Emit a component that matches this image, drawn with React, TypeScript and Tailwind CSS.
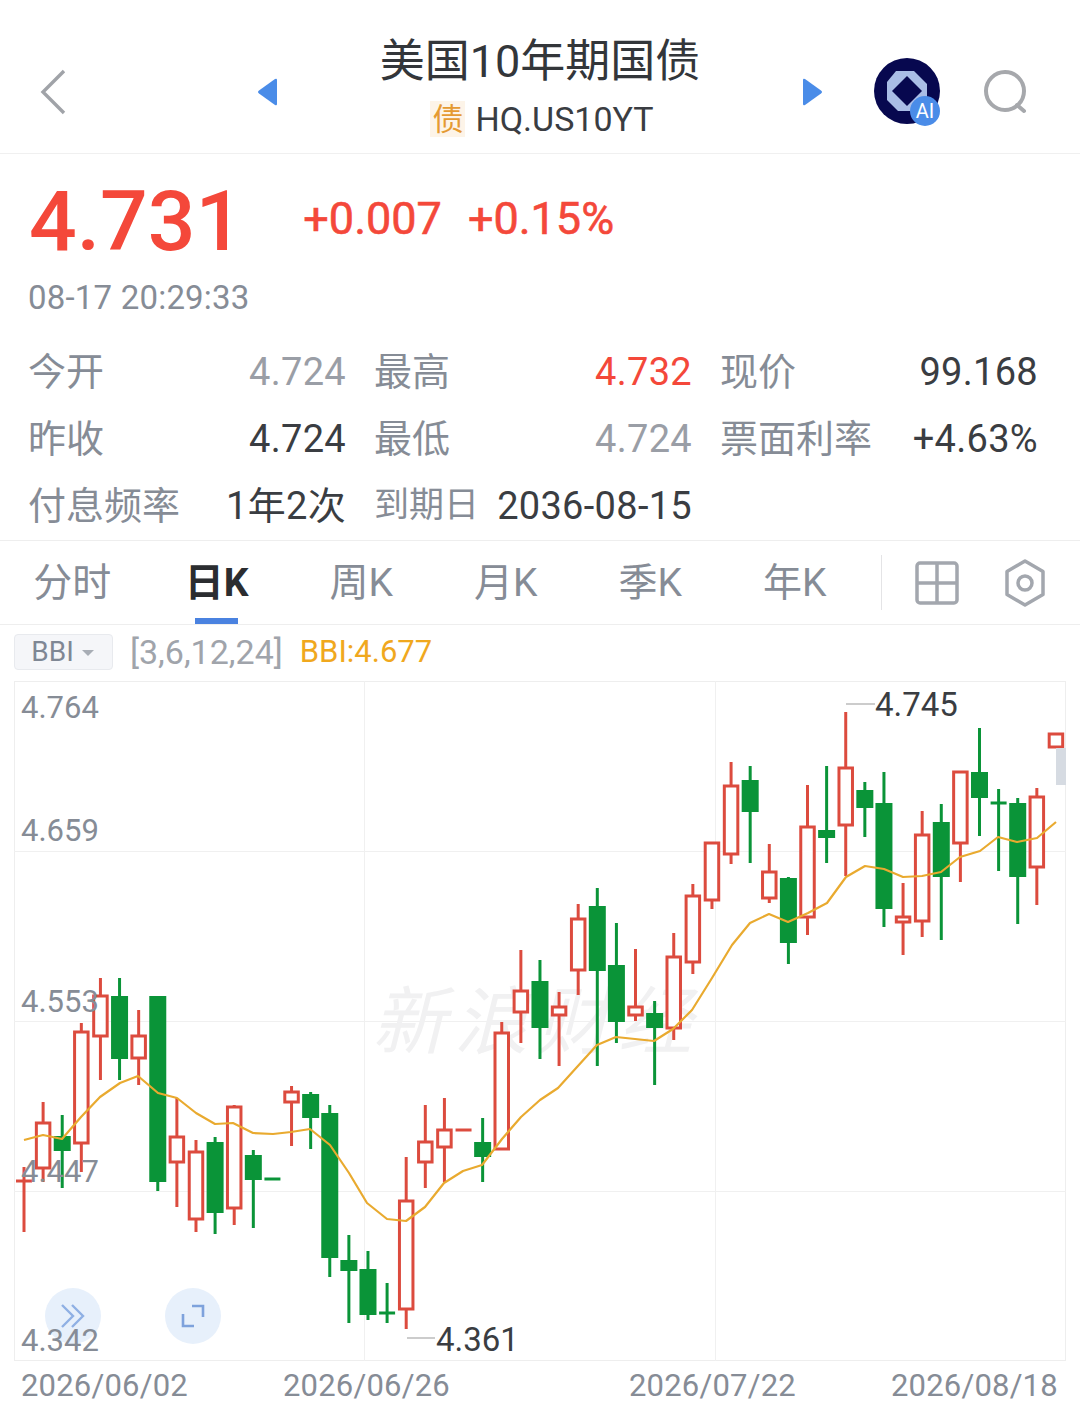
const RED = "#dc4b3e";
const GREEN = "#0a9438";

// [high, bodyTop, bodyBottom, low, up]
const candles: [number, number, number, number, boolean][] = [
  [1167, 1181, 1181, 1232, true],
  [1102, 1123, 1168, 1182, true],
  [1115, 1136, 1151, 1188, false],
  [1023, 1032, 1143, 1172, true],
  [978, 996, 1036, 1080, true],
  [978, 996, 1059, 1080, false],
  [1010, 1036, 1058, 1085, true],
  [996, 996, 1182, 1191, false],
  [1098, 1137, 1162, 1207, true],
  [1140, 1152, 1219, 1232, true],
  [1137, 1142, 1213, 1234, false],
  [1105, 1107, 1208, 1225, true],
  [1150, 1155, 1180, 1228, false],
  [1179, 1179, 1179, 1179, false],
  [1086, 1092, 1102, 1146, true],
  [1092, 1094, 1118, 1149, false],
  [1105, 1113, 1258, 1277, false],
  [1235, 1260, 1271, 1323, false],
  [1251, 1269, 1315, 1320, false],
  [1283, 1313, 1313, 1323, false],
  [1157, 1201, 1309, 1329, true],
  [1105, 1142, 1162, 1188, true],
  [1098, 1130, 1147, 1182, true],
  [1130, 1130, 1130, 1130, true],
  [1118, 1142, 1157, 1182, false],
  [1022, 1033, 1149, 1149, true],
  [950, 991, 1012, 1043, true],
  [960, 981, 1028, 1059, false],
  [992, 1007, 1015, 1066, true],
  [904, 919, 970, 995, true],
  [888, 906, 971, 1066, false],
  [923, 965, 1022, 1043, false],
  [949, 1007, 1015, 1021, true],
  [1001, 1013, 1028, 1085, false],
  [933, 957, 1028, 1040, true],
  [884, 896, 962, 974, true],
  [842, 843, 900, 909, true],
  [762, 786, 854, 864, true],
  [766, 780, 812, 863, false],
  [844, 872, 898, 903, true],
  [877, 878, 943, 964, false],
  [785, 827, 917, 935, true],
  [766, 830, 838, 863, false],
  [712, 768, 825, 876, true],
  [782, 790, 808, 837, false],
  [772, 803, 909, 927, false],
  [883, 917, 922, 955, true],
  [811, 835, 921, 937, true],
  [804, 822, 877, 940, false],
  [771, 772, 843, 882, true],
  [728, 772, 798, 836, false],
  [789, 803, 803, 871, false],
  [798, 803, 877, 924, false],
  [788, 797, 867, 905, true],
  [734, 734, 747, 747, true],
];

const bbi =
  "24,1140 43,1135 62,1139 81,1117 100,1097 120,1083 138,1076 158,1093 177,1098 196,1113 215,1124 233,1123 253,1133 273,1134 291,1132 310,1129 330,1145 349,1173 367,1203 387,1219 406,1221 425,1207 444,1183 463,1171 482,1165 502,1139 521,1117 540,1100 558,1088 577,1067 597,1045 616,1037 635,1039 654,1041 673,1029 692,1010 712,978 732,945 750,923 769,914 788,922 808,913 827,903 846,877 865,866 884,869 903,877 922,876 941,872 960,857 980,851 998,837 1017,842 1037,838 1056,822";

const Candle = ({ c, x }: { c: (typeof candles)[number]; x: number }) => {
  const [high, top, bottom, low, up] = c;
  const color = up ? RED : GREEN;
  const flat = bottom - top < 3;
  return (
    <g>
      {high < low && <line x1={x} x2={x} y1={high} y2={low} stroke={color} strokeWidth={3} />}
      {flat ? (
        <line x1={x - 8} x2={x + 8} y1={top} y2={top} stroke={color} strokeWidth={3} />
      ) : up ? (
        <rect x={x - 6.75} y={top} width={13.5} height={bottom - top} fill="#fff" stroke={color} strokeWidth={3} />
      ) : (
        <rect x={x - 8.5} y={top} width={17} height={bottom - top} fill={color} />
      )}
    </g>
  );
};

const Cell = ({ label, value, valueClass = "text-[#3a3d42]", labelClass = "text-[38px]" }: { label: string; value: string; valueClass?: string; labelClass?: string }) => (
  <div className="flex w-[318px] items-center justify-between">
    <span className={`text-[#868c96] ${labelClass}`}>{label}</span>
    <span className={`text-[38px] tracking-[0.3px] ${valueClass}`}>{value}</span>
  </div>
);

const TabItem = ({ label, active }: { label: string; active?: boolean }) => (
  <div className="relative flex w-[144.5px] items-center justify-center pt-[2px]">
    <span className={active ? "text-[39px] font-bold text-[#2b2d30]" : "text-[39px] text-[#868c96]"}>{label}</span>
    {active && <div className="absolute bottom-0 left-[50px] h-[6px] w-[43px] bg-[#4a82e0]" />}
  </div>
);

const Triangle = ({ left }: { left?: boolean }) => (
  <svg width="20" height="30" viewBox="0 0 20 30" className="mt-[30px] shrink-0">
    <path
      d={left ? "M18 2 L2 13.5 Q0 15 2 16.5 L18 28 Q20 29 20 27 L20 3 Q20 1 18 2Z" : "M2 2 L18 13.5 Q20 15 18 16.5 L2 28 Q0 29 0 27 L0 3 Q0 1 2 2Z"}
      fill="#4a8ce8"
    />
  </svg>
);

export default function App() {
  return (
    <div className="flex h-[1413px] w-[1080px] flex-col overflow-hidden bg-white font-['Roboto','Noto_Sans_CJK_SC',sans-serif]">
      {/* header */}
      <div className="flex h-[154px] items-center border-b border-[#f0f0f0] pl-[40px]">
        <svg width="26" height="46" viewBox="0 0 26 46" fill="none" className="mt-[30px] shrink-0">
          <path d="M24 2 L3 23 L24 44" stroke="#a0a3a8" strokeWidth="3.4" />
        </svg>
        <div className="w-[191px] shrink-0" />
        <Triangle left />
        <div className="flex h-full w-[526px] shrink-0 flex-col items-center pt-[35px]">
          <div className="text-[45px] leading-[54px] text-[#33363a]">美国10年期国债</div>
          <div className="ml-[4px] mt-[12px] flex items-center gap-[10px]">
            <span className="flex h-[36px] w-[35px] items-center justify-center bg-[#fdf4e8] text-[31px] leading-none text-[#e59a32]">债</span>
            <span className="text-[34px] leading-[36px] text-[#3a3d42]">HQ.US10YT</span>
          </div>
        </div>
        <Triangle />
        <svg width="68" height="68" viewBox="0 0 68 68" className="ml-[51px] mt-[30px] shrink-0">
          <circle cx="33" cy="33" r="33" fill="#07084f" />
          <path d="M22 13 H40 L53 26 V40 L40 53 H24 L13 42 V24Z" fill="#a9bde6" />
          <path d="M33 18 L48 33 L33 48 L18 33Z" fill="#07084f" />
          <circle cx="51" cy="53" r="15" fill="#4a8ce8" />
          <text x="51" y="60" textAnchor="middle" fontSize="20" fill="#fff">AI</text>
        </svg>
        <svg width="46" height="46" viewBox="0 0 46 46" fill="none" className="ml-[41px] mt-[30px] shrink-0">
          <circle cx="22" cy="22" r="19" stroke="#a6a8ac" strokeWidth="4" />
          <path d="M34 36 L41 42" stroke="#a6a8ac" strokeWidth="4" strokeLinecap="round" />
        </svg>
      </div>

      {/* quote */}
      <div className="flex h-[124px] shrink-0 items-start pl-[29px] pt-[22px]">
        <span className="text-[84px] font-medium leading-[92px] text-[#f4483a]">4.731</span>
        <div className="ml-[60px] mt-[18px] flex gap-[26px] text-[45px] leading-[50px] text-[#f4483a] [-webkit-text-stroke:0.6px_#f4483a]">
          <span>+0.007</span>
          <span>+0.15%</span>
        </div>
      </div>
      <div className="pl-[28px] text-[33px] leading-[40px] tracking-[0.2px] text-[#868c96]">08-17 20:29:33</div>

      {/* stats */}
      <div className="mt-[21px] flex flex-col pl-[28px]">
        <div className="flex h-[67px] items-center gap-[28px]">
          <Cell label="今开" value="4.724" valueClass="text-[#9a9ea6]" />
          <Cell label="最高" value="4.732" valueClass="text-[#f4483a]" />
          <Cell label="现价" value="99.168" />
        </div>
        <div className="flex h-[67px] items-center gap-[28px]">
          <Cell label="昨收" value="4.724" />
          <Cell label="最低" value="4.724" valueClass="text-[#9a9ea6]" />
          <Cell label="票面利率" value="+4.63%" />
        </div>
        <div className="flex h-[67px] items-center gap-[28px]">
          <Cell label="付息频率" value="1年2次" />
          <Cell label="到期日" labelClass="text-[35px]" value="2036-08-15" />
        </div>
      </div>

      {/* tabs */}
      <div className="flex h-[85px] shrink-0 border-y border-[#eeeeee]">
        <TabItem label="分时" />
        <TabItem label="日K" active />
        <TabItem label="周K" />
        <TabItem label="月K" />
        <TabItem label="季K" />
        <TabItem label="年K" />
        <div className="my-[14px] ml-[14px] w-[1px] bg-[#e4e4e6]" />
        <svg width="44" height="44" viewBox="0 0 44 44" fill="none" className="ml-[33px] mt-[20px] shrink-0">
          <rect x="2" y="2" width="40" height="40" rx="3" stroke="#a3a7ae" strokeWidth="3.5" />
          <path d="M22 2 V42 M2 22 H42" stroke="#a3a7ae" strokeWidth="3.5" />
        </svg>
        <svg width="42" height="48" viewBox="0 0 42 48" fill="none" className="ml-[45px] mt-[18px] shrink-0">
          <path d="M21 2 L39 12.5 V35.5 L21 46 L3 35.5 V12.5Z" stroke="#a3a7ae" strokeWidth="3.5" strokeLinejoin="round" />
          <circle cx="21" cy="24" r="7" stroke="#a3a7ae" strokeWidth="3.5" />
        </svg>
      </div>

      {/* indicator */}
      <div className="flex h-[56px] shrink-0 items-center pb-[2px] pl-[14px]">
        <div className="flex h-[36px] w-[99px] items-center justify-center gap-[8px] rounded-[4px] border border-[#e8eaee] bg-[#f5f6f9] pr-[2px]">
          <span className="text-[28px] text-[#7f8794]">BBI</span>
          <span className="mt-[2px] h-0 w-0 border-x-[6px] border-t-[6px] border-x-transparent border-t-[#a8adb5]" />
        </div>
        <span className="ml-[17px] text-[34px] text-[#a0a4ab]">[3,6,12,24]</span>
        <span className="ml-[17px] text-[31px] text-[#f0a81e]">BBI:4.677</span>
      </div>

      {/* chart */}
      <div className="relative mx-[14px] h-[680px] shrink-0">
        <div className="absolute left-[31px] top-[607px] flex h-[56px] w-[56px] items-center justify-center rounded-full bg-[#e7f0fb]">
          <svg width="28" height="28" viewBox="0 0 28 28" fill="none" stroke="#8fb0e4" strokeWidth="2.4">
            <path d="M3 3 L14 14 L3 25 M13 3 L24 14 L13 25" />
          </svg>
        </div>
        <div className="absolute left-[151px] top-[607px] flex h-[56px] w-[56px] items-center justify-center rounded-full bg-[#e7f0fb]">
          <svg width="24" height="24" viewBox="0 0 24 24" fill="none" stroke="#7ea2dc" strokeWidth="2.6">
            <path d="M2 10 V22 H13 M11 2 H22 V13" />
          </svg>
        </div>
        <svg width="1052" height="680" viewBox="14 681 1052 680" className="relative block font-['Roboto',sans-serif]">
          <rect x="14.5" y="681.5" width="1051" height="679" fill="none" stroke="#eeeeee" />
          <path d="M14 851.5 H1066 M14 1021.5 H1066 M14 1191.5 H1066 M364.5 681 V1361 M715.5 681 V1361" stroke="#f0f0f0" />
          <text x="372" y="1048" fontSize="74" fontStyle="italic" fill="#f1f1f2" letterSpacing="8" fontFamily="'Noto Sans CJK SC',sans-serif">新浪财经</text>
          {candles.map((c, i) => (
            <Candle key={i} c={c} x={24 + i * 19.11} />
          ))}
          <polyline points={bbi} fill="none" stroke="#e9aa2f" strokeWidth="2.2" strokeLinejoin="round" />
          <rect x="1056" y="748" width="10" height="37" fill="#d6dbe2" />
          <g fontSize="31" fill="#868c96">
            <text x="21" y="718">4.764</text>
            <text x="21" y="841">4.659</text>
            <text x="21" y="1012">4.553</text>
            <text x="21" y="1182">4.447</text>
            <text x="21" y="1351">4.342</text>
          </g>
          <path d="M846 704 H875 M407 1338 H435" stroke="#9a9a9a" strokeWidth="1.2" />
          <text x="875" y="716" fontSize="33" fill="#3a3d42">4.745</text>
          <text x="436" y="1351" fontSize="33" fill="#3a3d42">4.361</text>
        </svg>
      </div>

      {/* dates */}
      <div className="flex h-[50px] shrink-0 items-center text-[31px] tracking-[0.2px] text-[#868c96]">
        <span className="ml-[21px]">2026/06/02</span>
        <span className="ml-[95px]">2026/06/26</span>
        <span className="ml-[179px]">2026/07/22</span>
        <span className="ml-[95px]">2026/08/18</span>
      </div>
    </div>
  );
}
